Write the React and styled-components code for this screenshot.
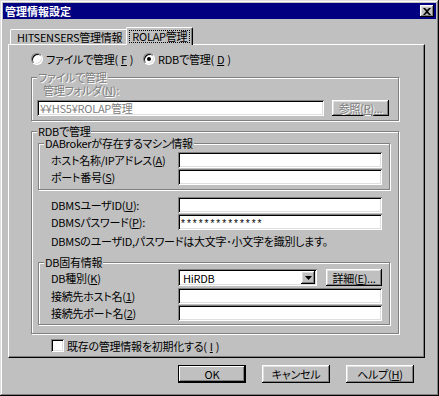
import React from "react";
import styled, { createGlobalStyle, css } from "styled-components";

const FACE = "#c0c0c0";
const FONT = `"Noto Sans CJK JP", "Noto Sans", sans-serif`;

const GlobalStyle = createGlobalStyle`
  html, body { margin: 0; padding: 0; background: ${FACE}; }
  body { font-family: ${FONT}; font-size: 11px; color: #000; }
  * { box-sizing: border-box; }
  u { text-underline-offset: 1px; }
`;

const raised = css`
  box-shadow: inset -1px -1px #000, inset 1px 1px #fff, inset -2px -2px #808080,
    inset 2px 2px #dfdfdf;
`;
const sunken = css`
  box-shadow: inset 1px 1px #808080, inset -1px -1px #fff, inset 2px 2px #000,
    inset -2px -2px #dfdfdf;
`;

const Window = styled.div`
  width: 439px;
  height: 396px;
  background: ${FACE};
  padding: 3px;
  display: flex;
  flex-direction: column;
  font-feature-settings: "palt";
  letter-spacing: -0.25px;
  box-shadow: inset -1px -1px #000, inset 1px 1px #dfdfdf, inset -2px -2px #808080,
    inset 2px 2px #fff;
`;

const TitleBar = styled.div`
  height: 16px;
  background: #000080;
  color: #fff;
  font-weight: bold;
  font-size: 11px;
  line-height: 16px;
  padding-left: 2px;
  letter-spacing: 0;
  display: flex;
  align-items: center;
  justify-content: space-between;
`;

const CloseButton = styled.div`
  width: 14px;
  height: 12px;
  margin-right: 2px;
  background: ${FACE};
  ${raised};
  display: flex;
  align-items: center;
  justify-content: center;
`;

const Body = styled.div`
  padding: 8px 11px 0 5px;
  display: flex;
  flex-direction: column;
`;

const TabStrip = styled.div`
  height: 17px;
  display: flex;
  align-items: flex-end;
  padding-left: 2px;
`;

const Tab = styled.div`
  position: relative;
  height: ${(p) => (p.$selected ? 18 : 15)}px;
  margin: ${(p) => (p.$selected ? "0 -2px -1px -2px" : "0")};
  z-index: ${(p) => (p.$selected ? 1 : 0)};
  padding: ${(p) => (p.$selected ? "0 3px" : "0 5px 0 6px")};
  background: ${FACE};
  border-top: 1px solid #fff;
  border-left: 1px solid #fff;
  border-right: 1px solid #000;
  border-radius: 2px 2px 0 0;
  box-shadow: inset -1px 0 #808080;
  display: flex;
  align-items: center;
  line-height: 12px;
  white-space: nowrap;
`;

const FocusText = styled.span`
  outline: 1px dotted #000;
  outline-offset: 0px;
  padding: 0 2px;
  line-height: 11px;
  margin-top: -1px;
`;

const Panel = styled.div`
  width: 417px;
  height: 314px;
  border-top: 1px solid #fff;
  border-left: 1px solid #fff;
  border-right: 1px solid #000;
  border-bottom: 1px solid #000;
  box-shadow: inset -1px -1px #808080;
  padding-left: 22px;
  display: flex;
  flex-direction: column;
`;

const RadioRow = styled.div`
  margin-top: 7px;
  height: 13px;
  display: flex;
  align-items: center;
`;

const RadioItem = styled.label`
  display: flex;
  align-items: center;
  gap: 3px;
  width: ${(p) => p.$w || "auto"};
  line-height: 12px;
  white-space: nowrap;
`;

const RadioCircle = styled.span`
  width: 12px;
  height: 12px;
  border-radius: 50%;
  background: #fff;
  border: 1px solid;
  border-color: #808080 #fff #fff #808080;
  box-shadow: inset 1px 1px #000, inset -1px -1px #dfdfdf;
  display: flex;
  align-items: center;
  justify-content: center;
  &::after {
    content: "";
    width: 4px;
    height: 4px;
    border-radius: 50%;
    background: ${(p) => (p.$checked ? "#000" : "transparent")};
  }
`;

const Group = styled.fieldset`
  margin: ${(p) => p.$mt || 0}px 0 0 ${(p) => p.$ml || 0}px;
  padding: 0 0 ${(p) => p.$pb || 0}px 0;
  min-width: 0;
  width: ${(p) => p.$w}px;
  border: 1px solid #808080;
  box-shadow: inset 1px 1px #fff, 1px 1px #fff;
  display: flex;
  flex-direction: column;
`;

const Legend = styled.legend`
  margin-left: 5px;
  padding: 0 1px;
  line-height: 12px;
  height: 12px;
  background: ${FACE};
  color: ${(p) => (p.$disabled ? "#808080" : "#000")};
  text-shadow: ${(p) => (p.$disabled ? "1px 1px 0 #fff" : "none")};
  white-space: nowrap;
`;

const DisabledLabel = styled.div`
  margin-left: 11px;
  margin-top: 1px;
  line-height: 13px;
  height: 13px;
  color: #808080;
  text-shadow: 1px 1px 0 #fff;
`;

const Row = styled.div`
  display: flex;
  align-items: center;
  height: ${(p) => p.$h || 16}px;
  margin-top: ${(p) => p.$mt || 0}px;
  padding-left: ${(p) => p.$pl || 0}px;
`;

const Label = styled.span`
  width: 127px;
  flex: none;
  line-height: 12px;
  white-space: nowrap;
`;

const Field = styled.div`
  width: ${(p) => p.$w}px;
  height: 16px;
  flex: none;
  background: #fff;
  ${sunken};
  padding: 0 3px;
  display: flex;
  align-items: center;
  line-height: 12px;
  color: ${(p) => (p.$disabled ? "#808080" : "#000")};
  white-space: nowrap;
  overflow: hidden;
`;

const Password = styled.span`
  font-family: "Liberation Sans", sans-serif;
  font-size: 10px;
  letter-spacing: 2px;
  padding-top: 3px;
`;

const Button = styled.div`
  width: ${(p) => p.$w}px;
  height: ${(p) => p.$h || 16}px;
  flex: none;
  margin-left: ${(p) => p.$ml || 0}px;
  background: ${FACE};
  ${raised};
  display: flex;
  align-items: center;
  justify-content: center;
  line-height: 12px;
  white-space: nowrap;
  color: ${(p) => (p.$disabled ? "#808080" : "#000")};
  text-shadow: ${(p) => (p.$disabled ? "1px 1px 0 #fff" : "none")};
  ${(p) =>
    p.$default &&
    css`
      box-shadow: inset 0 0 0 1px #000, inset -2px -2px #000, inset 2px 2px #fff,
        inset -3px -3px #808080;
    `}
`;

const Combo = styled.div`
  width: 139px;
  height: 17px;
  flex: none;
  background: #fff;
  ${sunken};
  padding: 2px 2px 2px 5px;
  display: flex;
  align-items: center;
  justify-content: space-between;
  line-height: 12px;
`;

const DropButton = styled.div`
  width: 14px;
  height: 13px;
  background: ${FACE};
  ${raised};
  display: flex;
  align-items: center;
  justify-content: center;
`;

const Note = styled.div`
  margin-top: 5px;
  padding-left: 19px;
  line-height: 13px;
  height: 13px;
  white-space: nowrap;
`;

const CheckRow = styled.label`
  margin: 5px 0 0 20px;
  display: flex;
  align-items: center;
  gap: 3px;
  height: 13px;
  line-height: 12px;
`;

const CheckBox = styled.span`
  width: 13px;
  height: 13px;
  background: #fff;
  ${sunken};
`;

const ButtonBar = styled.div`
  margin-top: 7px;
  padding-left: 170px;
  display: flex;
  gap: 16px;
`;

export default function App() {
  return (
    <>
      <GlobalStyle />
      <Window>
        <TitleBar>
          <span>管理情報設定</span>
          <CloseButton>
            <svg width="8" height="7" viewBox="0 0 8 7">
              <path d="M0 0h2l2 2 2-2h2L5 3.5 8 7H6L4 5 2 7H0l3-3.5z" fill="#000" />
            </svg>
          </CloseButton>
        </TitleBar>
        <Body>
          <TabStrip>
            <Tab>HITSENSERS管理情報</Tab>
            <Tab $selected>
              <FocusText>ROLAP管理</FocusText>
            </Tab>
          </TabStrip>
          <Panel>
            <RadioRow>
              <RadioItem $w="112px">
                <RadioCircle />
                ファイルで管理(<u>F</u>)
              </RadioItem>
              <RadioItem>
                <RadioCircle $checked />
                RDBで管理(<u>D</u>)
              </RadioItem>
            </RadioRow>

            <Group $w={368} $mt={6} $pb={4}>
              <Legend $disabled>ファイルで管理</Legend>
              <DisabledLabel>
                管理フォルダ(<u>N</u>):
              </DisabledLabel>
              <Row $mt={3} $pl={5}>
                <Field $w={287} $disabled>
                  ¥¥HS5¥ROLAP管理
                </Field>
                <Button $w={57} $ml={8} $disabled>
                  参照(<u>R</u>)...
                </Button>
              </Row>
            </Group>

            <Group $w={368} $mt={4} $pb={8}>
              <Legend>RDBで管理</Legend>
              <Group $w={352} $ml={6} $pb={4}>
                <Legend>DABrokerが存在するマシン情報</Legend>
                <Row $mt={3} $pl={12}>
                  <Label>
                    ホスト名称/IPアドレス(<u>A</u>)
                  </Label>
                  <Field $w={204} />
                </Row>
                <Row $mt={1} $pl={12}>
                  <Label>
                    ポート番号(<u>S</u>)
                  </Label>
                  <Field $w={204} />
                </Row>
              </Group>
              <Row $mt={7} $pl={19}>
                <Label>
                  DBMSユーザID(<u>U</u>):
                </Label>
                <Field $w={204} />
              </Row>
              <Row $mt={1} $pl={19}>
                <Label>
                  DBMSパスワード(<u>P</u>):
                </Label>
                <Field $w={204}>
                  <Password>**************</Password>
                </Field>
              </Row>
              <Note>DBMSのユーザID,パスワードは大文字･小文字を識別します。</Note>
              <Group $w={352} $ml={6} $mt={8} $pb={3}>
                <Legend>DB固有情報</Legend>
                <Row $mt={1} $pl={12} $h={17}>
                  <Label>
                    DB種別(<u>K</u>)
                  </Label>
                  <Combo>
                    <span>HiRDB</span>
                    <DropButton>
                      <svg width="7" height="4" viewBox="0 0 7 4">
                        <path d="M0 0h7L3.5 4z" fill="#000" />
                      </svg>
                    </DropButton>
                  </Combo>
                  <Button $w={56} $h={17} $ml={9}>
                    詳細(<u>E</u>)...
                  </Button>
                </Row>
                <Row $mt={2} $pl={12}>
                  <Label>
                    接続先ホスト名(<u>1</u>)
                  </Label>
                  <Field $w={204} />
                </Row>
                <Row $mt={1} $pl={12}>
                  <Label>
                    接続先ポート名(<u>2</u>)
                  </Label>
                  <Field $w={204} />
                </Row>
              </Group>
            </Group>

            <CheckRow>
              <CheckBox />
              既存の管理情報を初期化する(<u>I</u>)
            </CheckRow>
          </Panel>
          <ButtonBar>
            <Button $w={68} $h={18} $default>
              OK
            </Button>
            <Button $w={68} $h={18}>
              キャンセル
            </Button>
            <Button $w={68} $h={18}>
              ヘルプ(<u>H</u>)
            </Button>
          </ButtonBar>
        </Body>
      </Window>
    </>
  );
}
